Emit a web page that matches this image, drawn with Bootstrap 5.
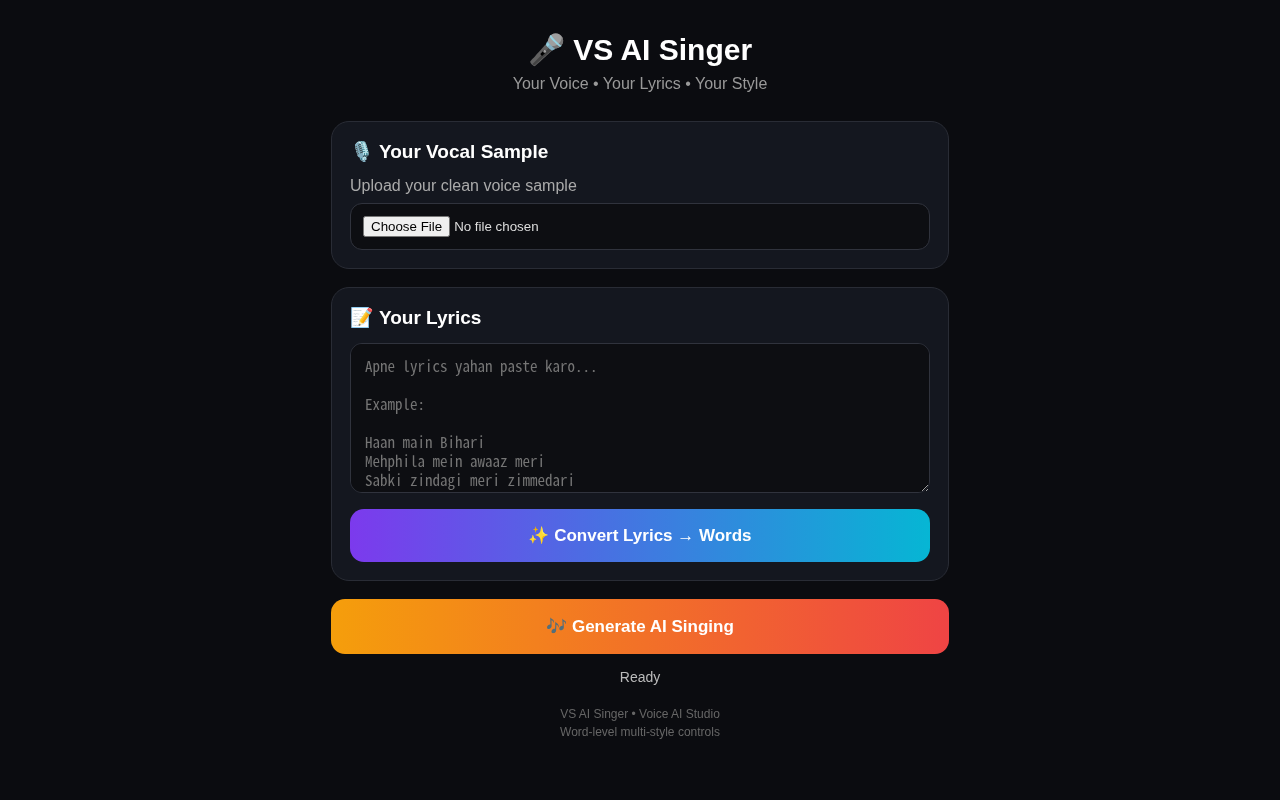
<!DOCTYPE html>
<html lang="en">
<head>
<meta charset="utf-8">
<meta name="viewport" content="width=device-width, initial-scale=1">
<title>VS AI Singer</title>
<link href="https://cdn.jsdelivr.net/npm/bootstrap@5.3.0/dist/css/bootstrap.min.css" rel="stylesheet">
<style>
  body {
    background: #0b0c10;
    color: #fff;
    font-family: "Liberation Sans", Arial, sans-serif;
  }
  .studio { max-width: 650px; padding: 32px 16px; }
  .studio-title { font-size: 30px; line-height: 36px; margin-bottom: 6px; }
  .studio-tagline { color: #999; line-height: 20px; margin-bottom: 27px; }
  .panel {
    background: #14171f;
    border: 1px solid #292c35;
    border-radius: 18px;
    padding: 18px;
    margin-bottom: 18px;
  }
  .panel-title { font-size: 19px; line-height: 23px; margin-bottom: 14px; }
  .field-label { color: #aaa; line-height: 18px; margin-bottom: 8px; }
  .field {
    background: #0d0e12;
    border: 1px solid #30333d;
    border-radius: 12px;
    color: #ddd;
  }
  .file-field { font-size: smaller; line-height: normal; padding: 12px; }
  .lyrics-field {
    font-family: "Noto Sans Mono CJK JP", monospace;
    font-size: 15px;
    line-height: 19px;
    height: 150px;
    padding: 12px 14px;
    margin-bottom: 16px;
  }
  .lyrics-field::placeholder { color: #757575; }
  .action {
    border: 0;
    border-radius: 14px;
    color: #fff;
    font-size: 17px;
    font-weight: 700;
    line-height: 21px;
    padding: 16px;
  }
  .action-convert { background: linear-gradient(90deg, #7c3aed, #06b6d4); }
  .action-generate { background: linear-gradient(90deg, #f59e0b, #ef4444); padding: 17px; }
  .status { color: #bbb; font-size: 14px; line-height: 18px; margin: 14px 0 19px; }
  .credits { color: #666; font-size: 12px; line-height: 18px; }
</style>
</head>
<body>
<main class="studio container-fluid mx-auto">
  <header class="text-center">
    <h1 class="studio-title fw-bold">🎤 VS AI Singer</h1>
    <p class="studio-tagline">Your Voice • Your Lyrics • Your Style</p>
  </header>

  <section class="panel">
    <h2 class="panel-title fw-bold">🎙️ Your Vocal Sample</h2>
    <label class="field-label d-block" for="voice">Upload your clean voice sample</label>
    <input class="field file-field d-block w-100" type="file" id="voice" accept="audio/*">
  </section>

  <section class="panel">
    <h2 class="panel-title fw-bold"><label for="lyrics">📝 Your Lyrics</label></h2>
    <textarea class="field lyrics-field d-block w-100" id="lyrics" placeholder="Apne lyrics yahan paste karo...

Example:

Haan main Bihari
Mehphila mein awaaz meri
Sabki zindagi meri zimmedari"></textarea>
    <button class="action action-convert d-block w-100" type="button">✨ Convert Lyrics → Words</button>
  </section>

  <button class="action action-generate d-block w-100" type="button">🎶 Generate AI Singing</button>
  <p class="status text-center" role="status">Ready</p>

  <footer class="credits text-center">
    VS AI Singer • Voice AI Studio<br>
    Word-level multi-style controls
  </footer>
</main>
<script src="https://cdn.jsdelivr.net/npm/bootstrap@5.3.0/dist/js/bootstrap.bundle.min.js"></script>
</body>
</html>
